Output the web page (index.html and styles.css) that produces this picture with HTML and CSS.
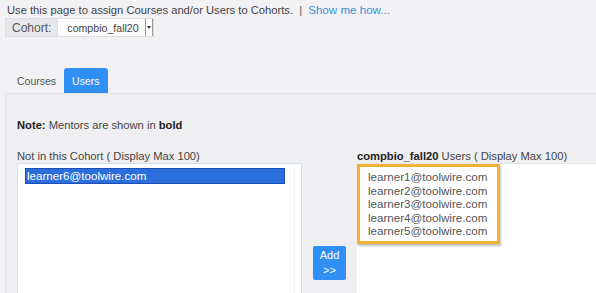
FILE: index.html
```html
<!DOCTYPE html>
<html>
<head>
  <meta charset="UTF-8">
  <title>Cohorts</title>
  <link rel="stylesheet" href="styles.css">
</head>
<body>
  <p class="intro">Use this page to assign Courses and/or Users to Cohorts. <span class="sep">|</span> <a href="#" class="help-link">Show me how...</a></p>
  <div class="cohort-picker">
    <span class="cohort-label">Cohort:</span>
    <span class="cohort-select">
      <span class="cohort-value">compbio_fall20</span>
      <span class="cohort-arrow"></span>
    </span>
  </div>
  <div class="tabs">
    <span class="tab">Courses</span>
    <span class="tab active">Users</span>
  </div>
  <div class="panel">
    <p class="note"><b>Note:</b> Mentors are shown in <b>bold</b></p>
    <div class="assign">
      <div class="col-left">
        <div class="list-title">Not in this Cohort ( Display Max 100)</div>
        <div class="listbox">
          <div class="list-item selected">learner6@toolwire.com</div>
          <div class="list-scroll"></div>
        </div>
      </div>
      <div class="col-mid">
        <button class="add-button">Add<br>&gt;&gt;</button>
      </div>
      <div class="col-right">
        <div class="list-title"><b>compbio_fall20</b> Users ( Display Max 100)</div>
        <div class="listbox right">
          <div class="highlight">
            <div class="list-item">learner1@toolwire.com</div>
            <div class="list-item">learner2@toolwire.com</div>
            <div class="list-item">learner3@toolwire.com</div>
            <div class="list-item">learner4@toolwire.com</div>
            <div class="list-item">learner5@toolwire.com</div>
          </div>
        </div>
      </div>
    </div>
  </div>
</body>
</html>
```

FILE: styles.css
```css
body {
  margin: 0;
  background: #f2f1f4;
  font-family: "Liberation Sans", Arial, sans-serif;
  color: #444;
  overflow: hidden;
}
.intro {
  margin: 0;
  padding: 2px 7px 0 7px;
  font-size: 11.2px;
  line-height: 16px;
}
.sep {
  color: #555;
  margin: 0 3px;
}
.help-link {
  color: #3a8fd8;
  text-decoration: none;
  font-size: 11.6px;
}
.cohort-picker {
  display: flex;
  margin: 0 0 0 5px;
  height: 19px;
  font-size: 12px;
}
.cohort-label {
  display: flex;
  align-items: center;
  padding: 0 6px;
  background: #e8e8ec;
  border: 1px solid #dcdce2;
  color: #555;
}
.cohort-select {
  display: flex;
  align-items: center;
  width: 95px;
  background: #fff;
  border: 1px solid #dcdce2;
  border-left: none;
}
.cohort-value {
  flex: 1;
  padding-left: 9px;
  font-size: 10.6px;
  color: #444;
}
.cohort-arrow {
  width: 6px;
  height: 17px;
  border-left: 1px solid #999;
  border-right: 1px solid #999;
  position: relative;
}
.cohort-arrow::after {
  content: "";
  position: absolute;
  left: 1px;
  top: 7px;
  border-left: 2px solid transparent;
  border-right: 2px solid transparent;
  border-top: 3px solid #333;
}
.tabs {
  display: flex;
  margin: 31px 0 0 9px;
  height: 25px;
}
.tab {
  display: flex;
  align-items: center;
  padding: 0 8px;
  font-size: 10.5px;
  color: #555;
  border-radius: 3px 3px 0 0;
}
.tab.active {
  background: #2f8ff2;
  color: #fff;
  padding: 0 8px;
}
.panel {
  margin-left: 5px;
  width: 700px;
  height: 220px;
  border: 1px solid #dce3ec;
  background: #efeff2;
  padding: 0 11px;
}
.note {
  margin: 23px 0 0 0;
  font-size: 11.2px;
  line-height: 16px;
  color: #444;
}
.note b {
  color: #222;
}
.assign {
  display: flex;
  margin-top: 16px;
}
.col-left {
  width: 285px;
}
.list-title {
  font-size: 11.2px;
  line-height: 14px;
  color: #444;
  white-space: nowrap;
}
.list-title b {
  color: #222;
}
.listbox {
  position: relative;
  height: 140px;
  background: #fff;
  border: 1px solid #d4e2ee;
  padding: 4px 0 0 7px;
  box-sizing: border-box;
}
.list-item {
  font-size: 11.6px;
  line-height: 13.6px;
  color: #555;
  white-space: nowrap;
}
.list-item.selected {
  width: 257px;
  background: #2c6fdc;
  color: #fff;
  padding-left: 1px;
  border: 1px solid #1b4fb3;
}
.list-scroll {
  position: absolute;
  top: 0;
  right: 6px;
  bottom: 0;
  border-left: 1px solid #eef1f5;
}
.col-mid {
  display: flex;
  align-items: flex-start;
  width: 55px;
  padding: 97px 0 0 11px;
  box-sizing: border-box;
}
.add-button {
  width: 33px;
  height: 34px;
  padding: 0;
  border: none;
  border-radius: 2px;
  background: #2f8ff2;
  color: #fff;
  font-family: "Liberation Sans", Arial, sans-serif;
  font-size: 11px;
  line-height: 15px;
}
.col-right {
  flex: 1;
}
.listbox.right {
  border: none;
  border-top: 1px solid #e4e6ea;
  padding: 0;
}
.highlight {
  width: 143px;
  height: 80px;
  border: 3px solid #f3b22f;
  box-sizing: border-box;
  padding: 3px 0 0 8px;
  box-shadow: 1px 2px 2px rgba(0, 0, 0, 0.25);
}
```
